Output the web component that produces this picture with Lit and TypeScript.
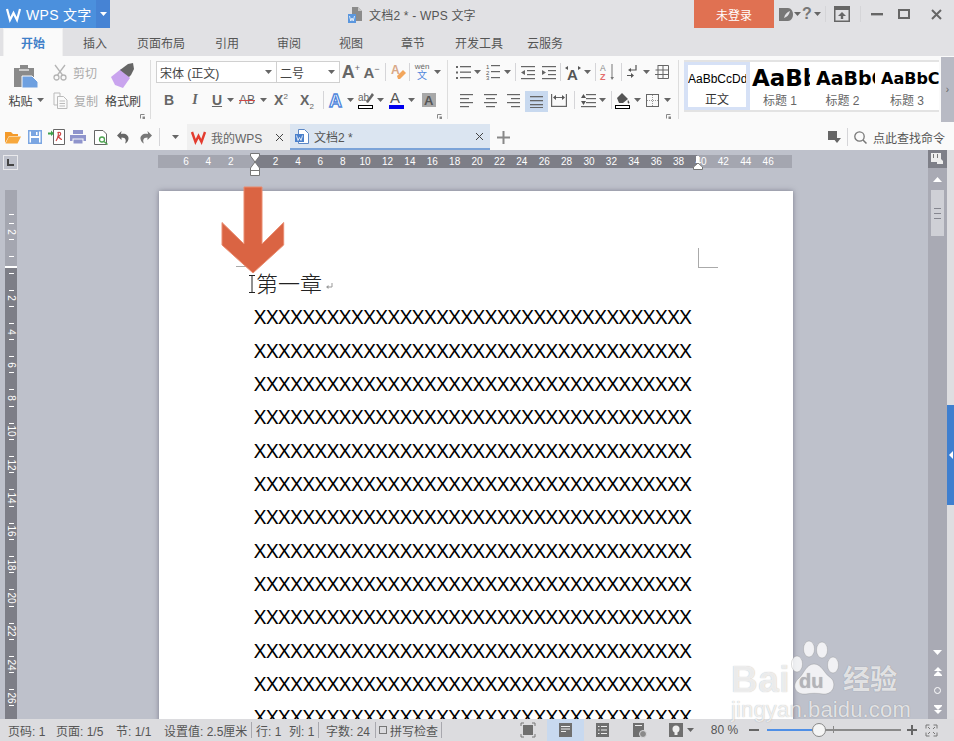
import { LitElement, html, css, svg, TemplateResult } from "lit";
import { customElement } from "lit/decorators.js";

type C = TemplateResult | string;
const S = (w: number, h: number, body: any) =>
  html`<svg width=${w} height=${h} viewBox=${`0 0 ${w} ${h}`}>${body}</svg>`;
const G = "#666";
const R = (x: number, y: number, w: number, h: number, f = G) => svg`<rect x=${x} y=${y} width=${w} height=${h} fill=${f}/>`;

const caret = (c = G) => S(7, 4, svg`<path d="M0 0H7L3.5 4Z" fill=${c}/>`);
const lines = (rows: [number, number][], w = 15) =>
  S(w, 15, rows.map(([x, l], i) => R(x, 1 + i * 4, l, 1.2)));

const IC = {
  wLogo: S(15, 13, svg`<path d="M1 1L4 12L7.5 5L11 12L14 1" fill="none" stroke="#fff" stroke-width="2.2"/>`),
  titleDoc: S(15, 17, svg`<path d="M4 1H10L14 5V15H4Z" fill="#8b8b8b"/><path d="M10 1L14 5H10Z" fill="#c8c8c8"/><rect x="0" y="8" width="8" height="9" fill="#5b97de"/><path d="M1.5 10L2.8 15L4 12L5.2 15L6.5 10" fill="none" stroke="#fff" stroke-width=".8"/>`),
  mLogo: S(16, 15, svg`<path d="M1 1H10C13 1 15 4 15 7.5C15 11 13 14 10 14H1Z" fill="#777"/><path d="M6 11C7 7 9 5 12 4C11 8 9 10 6 11Z" fill="#e1e1e4"/>`),
  upload: S(16, 16, svg`<rect x=".75" y=".75" width="14.5" height="14.5" fill="none" stroke="#666" stroke-width="1.5"/><rect x="1" y="1" width="14" height="3" fill="#666"/><path d="M8 6L12 10H9.2V13H6.8V10H4Z" fill="#666"/>`),
  min: S(12, 3, R(0, 0, 12, 2.4)),
  max: S(12, 10, svg`<rect x="1" y="1" width="10" height="8" fill="none" stroke="#666" stroke-width="2"/>`),
  close: S(11, 11, svg`<path d="M1 1L10 10M10 1L1 10" stroke="#666" stroke-width="2"/>`),
  paste: S(24, 24, svg`<path d="M0 4H6V1H14V4H20V23H0Z" fill="#8a8a8a"/><rect x="5" y="5" width="10" height="2" fill="#ccc"/><path d="M8 12H18L24 18V24H8Z" fill="#6ea0e0" stroke="#fafafa" stroke-width="1"/>`),
  scissors: S(14, 17, svg`<g fill="none" stroke="#b5b5b5" stroke-width="1.3"><path d="M2 1L9.5 11M12 1L4.500 11"/><circle cx="3.500" cy="13.500" r="2.500"/><circle cx="10.500" cy="13.500" r="2.500"/></g>`),
  copy: S(15, 17, svg`<g fill="#fafafa" stroke="#bbb" stroke-width="1"><path d="M1 1H7V13H1Z"/><path d="M4.500 4.500H10.500L14 8V16.500H4.500Z"/></g><path d="M6.500 9H12M6.500 11.500H12M6.500 14H12" stroke="#bbb"/>`),
  brush: S(24, 25, svg`<path d="M0 14L10 6L19 15L12 25L4 22Z" fill="#c9a4ee"/><path d="M9 7L17 1L22 0L23 6L20 12L18 14Z" fill="#666"/>`),
  launcher: S(5, 5, svg`<path d="M.5 4.500V.5H4.500" fill="none" stroke="#888"/><rect x="2.500" y="2.500" width="2.500" height="2.500" fill="#888"/>`),
  eraser: S(15, 17, svg`<text x="0" y="10" font-size="12" font-family="Liberation Sans" font-weight="700" fill="#d8a888">A</text><path d="M6 12L12 6L15 9L9 15H7Z" fill="#f2a65c"/>`),
  aOutline: S(16, 17, svg`<text x="1" y="15" font-size="18" font-family="Liberation Sans" font-weight="700" fill="#fff" stroke="#4f86dc" stroke-width="1.300">A</text>`),
  ab: S(16, 19, svg`<text x="0" y="10" font-size="10" font-family="Liberation Sans" fill="#666">ab</text><path d="M8 11L14 2L16 4L10 12Z" fill="#666"/><rect x=".5" y="14.500" width="14" height="3" fill="#fff" stroke="#000"/>`),
  aBlue: S(15, 19, svg`<text x="1" y="12" font-size="15" font-family="Liberation Sans" fill="#555">A</text><rect x="0" y="14" width="15" height="4" fill="#0000ee"/>`),
  aShade: S(14, 14, svg`<rect width="14" height="14" fill="#a8a8a8"/><text x="2" y="12" font-size="13" font-family="Liberation Sans" font-weight="700" fill="#555">A</text>`),
  bullets: S(15, 15, svg`${[1, 6.500, 12].map((y) => svg`${R(0, y, 2, 2)}${R(4, y, 11, 1.3)}`)}`),
  numbers: S(14, 16, svg`${[5, 10.500, 16].map((y, i) => svg`<text x="0" y=${y} font-size="6" font-family="Liberation Sans" fill="#555">${i + 1}</text>`)}${R(5, 1, 9, 1.2)}${R(5, 7, 9, 1.2)}${R(5, 13, 9, 1.2)}`),
  indL: S(14, 15, svg`${R(0, 1, 14, 1.2)}${R(6, 5, 8, 1.2)}${R(6, 9, 8, 1.2)}${R(0, 13, 14, 1.2)}<path d="M0 7.500L4 5V10Z" fill="#666"/>`),
  indR: S(14, 15, svg`${R(0, 1, 14, 1.2)}${R(6, 5, 8, 1.2)}${R(6, 9, 8, 1.2)}${R(0, 13, 14, 1.2)}<path d="M4 7.500L0 5V10Z" fill="#666"/>`),
  aSpace: S(16, 15, svg`<text x="2" y="15" font-size="15" font-family="Liberation Sans" font-weight="700" fill="#555">A</text><path d="M0 3L3 1V5ZM16 3L13 1V5Z" fill="#555"/>`),
  az: S(15, 18, svg`<text x="0" y="8" font-size="8.500" font-family="Liberation Sans" fill="#888">A</text><text x="0" y="17" font-size="9" font-family="Liberation Sans" font-weight="700" fill="#e46c6c">Z</text><path d="M12 1V15" stroke="#777"/><path d="M10.500 14H14L12 17Z" fill="#777"/>`),
  enter: S(10, 14, svg`<path d="M9 0V5H3" fill="none" stroke="#555" stroke-width="1.200"/><path d="M1 5L4 3V7ZM4 10H0V11H4V13L7 10.500L4 8Z" fill="#555"/>`),
  table: S(14, 14, svg`<path d="M3 .5H13.500V13.500H3M0 9.500H13.500M.5 5H13.500M3 0V14M8 0V14" fill="none" stroke="#666"/>`),
  aL: lines([[0, 13], [0, 9], [0, 13], [0, 9]], 13),
  aC: lines([[0, 13], [2, 9], [0, 13], [2, 9]], 13),
  aR: lines([[0, 13], [4, 9], [0, 13], [4, 9]], 13),
  aJ: S(13, 13, svg`${R(0, 1, 13, 1.3)}${R(0, 5, 13, 1.3)}${R(0, 9, 13, 1.3)}${R(0, 12, 13, 1)}`),
  dist: S(16, 13, svg`${R(0, 0, 1.2, 13)}${R(14.800, 0, 1.2, 13)}${R(0, 11.800, 16, 1.2)}${R(3, 3, 10, 1)}<path d="M2 3.500L5 1V6ZM14 3.500L11 1V6Z" fill="#555"/>`),
  lsp: S(15, 15, svg`${R(5, 1, 10, 1.2)}${R(5, 5, 10, 1.2)}${R(5, 9, 10, 1.2)}${R(0, 13, 15, 1.2)}<path d="M0 5L2.500 1L5 5ZM0 8H5L2.500 12Z" fill="#555"/>`),
  fill: S(15, 18, svg`<path d="M2 7L7 2L13 8L8 12H4Z" fill="#555"/><path d="M13 9C14 10.500 15 11.500 14 12.500C13 13 12 11 13 9Z" fill="#555"/><rect x=".5" y="14.500" width="14" height="3" fill="#fff" stroke="#000"/>`),
  border: S(13, 13, svg`<rect x=".5" y=".5" width="12" height="12" fill="none" stroke="#666"/><path d="M6.500 1V12M1 6.500H12" stroke="#999" stroke-dasharray="1 1"/>`),
  folder: S(16, 13, svg`<path d="M0 1H6L8 3H13V5H4L0 12Z" fill="#f49a2a"/><path d="M4 5.500H16L12.500 12.500H0.500Z" fill="#f7a83d"/>`),
  save: S(14, 14, svg`<rect x=".75" y=".75" width="12.500" height="12.500" fill="#fff" stroke="#7ba6e2" stroke-width="1.500"/><rect x="3" y="1" width="8" height="5" fill="#7ba6e2"/><rect x="3" y="8" width="8" height="5" fill="#7ba6e2"/><rect x="8" y="2" width="1.500" height="3" fill="#fff"/>`),
  pdf: S(17, 16, svg`<path d="M5.500 .5H16.500V15.500H5.500Z" fill="#fff" stroke="#666"/><path d="M0 3.500H3V1.500L6 4.500L3 7V5.500H0Z" fill="#3fa24b"/><path d="M8 12C10 9 11 5 10 3.500C13 2.500 14 6 10 7.500C11 8.500 13 10.500 14 10.500" fill="none" stroke="#d04848" stroke-width="1.200"/>`),
  print: S(16, 14, svg`<rect x="3" y="0" width="10" height="4" fill="#8f94cc"/><rect x="0" y="5" width="16" height="6" fill="#8f94cc"/><rect x="3" y="9" width="10" height="5" fill="#8f94cc" stroke="#fafafa"/>`),
  preview: S(14, 15, svg`<path d="M.5 .5H9L12.500 4V14.500H.5Z" fill="#fff" stroke="#666"/><circle cx="8" cy="9.500" r="2.500" fill="none" stroke="#4ca24f" stroke-width="1.300"/><path d="M10 11.500L13.500 14.500" stroke="#4ca24f" stroke-width="1.500"/>`),
  undo: S(13, 13, svg`<path d="M4 3C8 2 12 4 11.500 8C11 10.500 9.500 12 8 12.500C9.500 9.500 9 6.500 4.500 6.500V9L0 4.500L4.500 0Z" fill="#666"/>`),
  redo: S(13, 13, svg`<path d="M9 3C5 2 1 4 1.500 8C2 10.500 3.500 12 5 12.500C3.500 9.500 4 6.500 8.500 6.500V9L13 4.500L8.500 0Z" fill="#777"/>`),
  wps: S(15, 12, svg`<path d="M1 1L4.500 11L7.500 5L10.500 11L14 1" fill="none" stroke="#e33b2e" stroke-width="2.400"/>`),
  docTab: S(14, 15, svg`<path d="M3.500 .5H9.500L13.500 4.500V14.500H3.500Z" fill="#fff" stroke="#5d88c5"/><rect x="0" y="5" width="9" height="8" fill="#4a80cc"/><path d="M1.500 6.500L3 11.500L4.500 8.500L6 11.500L7.500 6.500" fill="none" stroke="#fff" stroke-width=".8"/>`),
  x: S(9, 9, svg`<path d="M1 1L8 8M8 1L1 8" stroke="#444" stroke-width="1"/>`),
  plus: S(13, 13, svg`${R(5.500, 0, 2, 13, "#888")}${R(0, 5.500, 13, 2, "#888")}`),
  cmd: S(13, 12, svg`${R(0, 0, 9, 9)}<path d="M5 7H13L9 12Z" fill="#666"/>`),
  search: S(13, 13, svg`<circle cx="5.500" cy="5.500" r="4.700" fill="none" stroke="#777" stroke-width="1.300"/><path d="M9 9L12.500 12.500" stroke="#777" stroke-width="1.500"/>`),
  sToggle: S(13, 12, svg`<rect width="10" height="9" fill="#eee"/>${R(2, 1, 1, 4, "#777")}${R(6, 1, 1, 4, "#777")}<path d="M6 11V8L9 5L12 8V11Z" fill="#eee"/>`),
  tri: (up: boolean) => S(9, 5, svg`<path d=${up ? "M0 5H9L4.500 0Z" : "M0 0H9L4.500 5Z"} fill="#fff"/>`),
  dblU: S(8, 9, svg`<path d="M0 4H8L4 0ZM0 8H8V9H0ZM0 8L4 4L8 8Z" fill="#fff"/>`),
  dblD: S(8, 9, svg`<path d="M0 0H8V1H0ZM0 1H8L4 5ZM0 5H8L4 9Z" fill="#fff"/>`),
  circ: S(7, 7, svg`<circle cx="3.500" cy="3.500" r="3" fill="none" stroke="#fff"/>`),
  fit: S(14, 14, svg`<rect x="2" y="2" width="10" height="10" fill="#6f6f6f"/><path d="M0 3V0H3M11 0H14V3M14 11V14H11M3 14H0V11" fill="none" stroke="#777"/>`),
  pageV: S(13, 14, svg`<rect width="13" height="14" fill="#6f6f6f"/>${R(2, 3, 9, 1, "#eee")}${R(2, 5.500, 9, 1, "#eee")}${R(2, 8, 5, 1, "#eee")}`),
  outline: S(13, 14, svg`<rect width="13" height="14" fill="#6f6f6f"/>${[3, 6.500, 10].map((y) => svg`${R(2, y, 1.500, 1, "#eee")}${R(5, y, 6, 1, "#eee")}`)}`),
  web: S(14, 15, svg`<rect width="11" height="14" fill="#6f6f6f"/>${R(2, 2, 7, 1, "#eee")}<circle cx="10" cy="11" r="3.500" fill="#8a8a8a" stroke="#dcdcdf"/>`),
  bulb: S(14, 14, svg`<rect width="14" height="14" fill="#6f6f6f"/><circle cx="7" cy="6" r="3.500" fill="#eee"/><rect x="5.500" y="9" width="3" height="3" fill="#eee"/>`),
  minus: S(10, 2, R(0, 0, 10, 2)),
  plusS: S(10, 10, svg`${R(4, 0, 2, 10)}${R(0, 4, 10, 2)}`),
  full: S(11, 11, svg`<path d="M0 3.500V0H3.500M7.500 0H11V3.500M11 7.500V11H7.500M3.500 11H0V7.500" fill="none" stroke="#777"/><path d="M2 2L4 4M9 2L7 4M2 9L4 7M9 9L7 7" stroke="#777"/>`),
  ret: S(7, 7, svg`<path d="M6 0V4H1" fill="none" stroke="#999"/><path d="M0 4L2.500 2V6Z" fill="#999"/>`),
  ibeam: S(6, 18, svg`<path d="M0 .5H6M0 17.500H6M3 0V18" stroke="#222" fill="none"/>`),
  corner: S(7, 7, svg`<path d="M1 0V6H7" fill="none" stroke="#444" stroke-width="2"/>`),
  arrow: S(64, 88, svg`<path d="M23 1H41V58L62.700 36.500V59L32 87L1 59V36.500L23 58Z" fill="#da6443" stroke="#ea8c70" stroke-width="1"/>`),
};

const sep = (h = 18) => html`<i class="vsep" style=${`height:${h}px`}></i>`;
const cell = (w: number, c: C = "", cls = "") =>
  html`<span class="cell ${cls}" style=${`width:${w}px`}>${c}</span>`;

const hNums = ["6", "4", "2", "", ...Array.from({ length: 23 }, (_, i) => String((i + 1) * 2))];
const vNums = ["", "2", "", ...Array.from({ length: 14 }, (_, i) => String((i + 1) * 2))];

@customElement("app-root")
export class AppRoot extends LitElement {
  static styles = css`
    :host { display: block; width: 954px; height: 741px; overflow: hidden; position: relative;
      font: 12px "Liberation Sans", "Noto Sans CJK SC", sans-serif; color: #444; }
    * { box-sizing: border-box; }
    svg { display: block; flex: none; overflow: visible; }
    .root { display: flex; flex-direction: column; height: 741px; background: #e1e1e4; }
    .cell { display: flex; align-items: center; justify-content: center; flex: none; height: 100%; white-space: nowrap; }
    .left { justify-content: flex-start; }
    .vsep { display: block; width: 1px; background: #d5d5d8; flex: none; }

    .title { display: flex; height: 28px; flex: none; align-items: stretch; }
    .logo { width: 96px; background: #4b90dd; color: #fff; display: flex; align-items: center; gap: 5px; padding-left: 6px; font-size: 14px; letter-spacing: .3px; }
    .logo-drop { width: 14px; background: #4683d4; display: flex; align-items: center; justify-content: center; }
    .doc-title { flex: 1; display: flex; align-items: center; gap: 6px; padding-left: 238px; color: #555; font-size: 12px; letter-spacing: .2px; }
    .login { width: 80px; background: #e07152; color: #fff; display: flex; align-items: center; justify-content: center; font-size: 12px; flex: none; }
    .q { font-size: 16px; font-weight: 700; color: #777; }

    .tabs { display: flex; height: 28px; flex: none; padding-left: 3px; }
    .tab { display: flex; align-items: center; justify-content: center; flex: none; color: #555; }
    .tab.on { background: #fafafa; color: #3f80c8; font-weight: 700; border: 1px solid #f0f0f0; border-bottom: 0; }

    .ribbon { display: flex; height: 68px; flex: none; background: #fafafa; }
    .rsep { width: 1px; height: 59px; margin-top: 4px; background: #ddd; flex: none; }
    .grp { position: relative; flex: none; }
    .lnch { position: absolute; right: 5px; bottom: 5px; }
    .g1 { width: 150px; display: flex; }
    .bigcol { display: flex; flex-direction: column; align-items: center; padding-top: 7px; }
    .bigicon { height: 25px; display: flex; align-items: center; justify-content: center; }
    .biglabel { margin-top: 4px; height: 16px; display: flex; align-items: center; gap: 4px; color: #444; }
    .c1 { width: 52px; } .c3 { width: 38px; margin-left: 2px; }
    .c2 { width: 50px; display: flex; flex-direction: column; padding-top: 7px; gap: 10px; }
    .smrow { height: 18px; display: flex; align-items: center; gap: 6px; color: #aaa; padding-left: 1px; }
    .g2 { width: 296px; padding: 5px 0 0 5px; display: flex; flex-direction: column; }
    .g3 { width: 230px; padding-top: 5px; display: flex; flex-direction: column; }
    .r1 { display: flex; height: 22px; }
    .r2 { display: flex; height: 24px; margin-top: 5px; }
    .combo { border: 1px solid #d0d0d0; display: flex; align-items: center; justify-content: space-between; padding: 0 4px 0 3px; height: 22px; font-size: 12px; color: #444; background: #fff; }
    .combo + .combo { border-left: 0; }
    .fmt { font-size: 14px; font-weight: 700; color: #666; }
    .ital { font: italic 14px "Liberation Serif", serif; font-weight: 700; }
    .ul { text-decoration: underline; }
    .strike { text-decoration: line-through; text-decoration-color: #d04848; font-weight: 400; font-size: 12px; }
    .fmt sup, .fmt sub { font-size: 8px; line-height: 0; font-weight: 400; }
    .bigA { font-size: 18px; font-weight: 700; color: #666; }
    .bigA.s { font-size: 15px; }
    .bigA sup { font-size: 9px; line-height: 0; font-weight: 400; }
    .wen { display: flex; flex-direction: column; align-items: center; line-height: 8px; font-size: 8px; color: #666; }
    .wen b { color: #4f86dc; font-weight: 400; font-size: 10px; line-height: 10px; }
    .act { background: #c8d9ef; height: 21px; margin-top: 3px; }

    .g4 { display: flex; flex: none; }
    .gallery { width: 255px; height: 52px; margin: 4px 0 0 5px; display: flex; background: #fff; border: solid #e3e3e3; border-width: 2px 0 2px 0; }
    .sty { flex: none; display: flex; flex-direction: column; align-items: center; overflow: hidden; color: #666; }
    .sty.on { border: 4px solid #d6e1f6; border-top-width: 3px; border-bottom-width: 3px; color: #333; }
    .pv { height: 32px; display: flex; align-items: center; color: #000; white-space: nowrap; width: 100%; overflow: hidden; font-family: "DejaVu Sans", sans-serif; }
    .pv.plain { font-family: "Liberation Sans", sans-serif; }
    .sty .lb { font-size: 12px; line-height: 14px; }
    .more { width: 13px; height: 65px; margin: 1px 0 0 2px; background: #b8bac4; display: flex; align-items: center; justify-content: center; color: #666; font-size: 10px; }

    .quick { display: flex; height: 26px; flex: none; background: #fafafa; align-items: stretch; }
    .dtab { flex: none; display: flex; align-items: center; background: #f0f0f0; padding: 0 6px 0 4px; gap: 5px; color: #666; }
    .dtab.cur { background: #dbe5f1; border-bottom: 2px solid #7ba3d8; padding-left: 5px; color: #555; }
    .dtab .sp { flex: 1; }
    .qright { margin-left: auto; padding-right: 9px; display: flex; align-items: center; gap: 6px; color: #555; }

    .work { flex: 1; min-height: 0; display: flex; background: #bec1cb; overflow: hidden; }
    .center { width: 928px; flex: none; display: flex; flex-direction: column; overflow: hidden; }
    .rtop { height: 40px; flex: none; padding-top: 5px; display: flex; align-items: flex-start; }
    .cbtn { width: 15px; height: 15px; margin-left: 3px; border: 1px solid #e9e9ec; display: flex; align-items: center; justify-content: center; }
    .hr { position: relative; width: 634px; height: 13px; margin-left: 140px; padding-left: 16.800px; display: flex; color: #fff; font-size: 10px;
      background: linear-gradient(90deg, #a4a6b0 96px, #7d7e87 96px, #7d7e87 539px, #a4a6b0 539px); }
    .hn { width: 22.400px; flex: none; text-align: center; line-height: 13px; }
    .marker { position: absolute; top: -2px; left: 92px; width: 10px; }
    .marker2 { position: absolute; top: 1px; left: 535px; width: 10px; }
    .body { flex: 1; min-height: 0; display: flex; align-items: flex-start; }
    .vr { width: 12px; height: 529px; margin-left: 5px; flex: none; overflow: hidden; color: #fff; font-size: 10px;
      background: linear-gradient(180deg, #a4a6b0 76px, #fff 76px, #fff 78px, #7d7e87 78px); }
    .vc { height: 33.300px; display: flex; flex-direction: column; align-items: center; justify-content: space-between; padding: 8px 0; }
    .vc.first { height: 25px; padding: 0 0 0; justify-content: flex-end; }
    .vc i { display: block; width: 5px; height: 1px; background: #fff; flex: none; }
    .vc span { transform: rotate(90deg); line-height: 10px; height: 10px; white-space: nowrap; }
    .page { position: relative; width: 634px; height: 600px; margin: 1px 0 0 142px; flex: none; background: #fff; box-shadow: 0 0 5px rgba(70,70,90,.55); padding: 76px 100px 0 95px; color: #000; }
    .mark-l { position: absolute; left: 77px; top: 56px; width: 18px; height: 20px; border-bottom: 1px solid #aaa; }
    .mark-r { position: absolute; left: 539px; top: 57px; width: 20px; height: 20px; border: solid #aaa; border-width: 0 0 1px 1px; }
    .h { height: 33.350px; display: flex; align-items: center; font-size: 22px; font-weight: 300; margin-left: -5px; gap: 1px; color: #222; white-space: nowrap; }
    .h span { margin-top: -4px; }
    .h svg:last-child { margin: 6px 0 0 3px; }
    .xl { height: 33.350px; font: 20.750px/33.350px "Noto Sans", sans-serif; white-space: nowrap; }

    .scroll { width: 19px; flex: none; background: #a9aab4; display: flex; flex-direction: column; align-items: center; }
    .stop { width: 100%; height: 18px; background: #7e7f88; display: flex; align-items: center; justify-content: center; flex: none; }
    .sbtn { width: 100%; height: 22px; display: flex; align-items: center; justify-content: center; flex: none; }
    .thumb { width: 13px; height: 46px; background: #cfd0d6; flex: none; display: flex; flex-direction: column; gap: 4px; align-items: center; justify-content: center; }
    .thumb i { display: block; width: 7px; height: 1px; background: #85868f; }
    .sgrow { flex: 1; }
    .s19 { height: 19px; }
    .strip { width: 7px; flex: none; background: #dedee1; padding-top: 255px; }
    .blue { height: 100px; background: #3f7fcf; display: flex; align-items: center; justify-content: center; }
    .blue s { display: block; width: 0; height: 0; border: 4px solid transparent; border-left: 0; border-right: 4px solid #fff; }

    .status { height: 22px; flex: none; background: #dcdcdf; display: flex; color: #555; position: relative; }
    .status .vsep { background: #a8a8ae; height: 16px; }
    .pv-on { background: #c8d9ef; }
    .chk { width: 8px; height: 8px; border: 1px solid #777; margin-right: 3px; flex: none; }
    .zoom { font-size: 12px; }
    .slider { position: relative; height: 2px; width: 134px; background: linear-gradient(90deg, #4f8fe6 45px, #8a8a8a 45px); }
    .knob { position: absolute; left: 45px; top: -6px; width: 14px; height: 14px; border-radius: 50%; background: #f5f5f5; border: 1px solid #888; }
    .tick { position: absolute; left: 66px; top: -3px; width: 1px; height: 7px; background: #888; }

    .arrow { position: absolute; left: 221px; top: 186px; }
    .wm { position: absolute; left: 731px; top: 639px; width: 175px; height: 82px; color: rgba(255,255,255,.75); text-shadow: 0 0 1px rgba(0,0,0,.3); pointer-events: none; }
    .wm-top { display: flex; align-items: flex-end; height: 60px; }
    .bai { font: 700 37px "Liberation Sans", sans-serif; line-height: 38px; width: 60px; letter-spacing: .5px; }
    .jy { font: 700 27px "Noto Sans CJK SC", sans-serif; line-height: 38px; margin-left: 2px; margin-bottom: 2px; white-space: nowrap; }
    .wm-url { font: 400 22px "Liberation Sans", sans-serif; line-height: 22px; white-space: nowrap; letter-spacing: .15px; }
  `;

  private renderTitle() {
    return html`<div class="title">
      <div class="logo">${IC.wLogo}<span>WPS 文字</span></div>
      <div class="logo-drop">${caret("#fff")}</div>
      <div class="doc-title">${IC.titleDoc}<span>文档2 * - WPS 文字</span></div>
      <div class="login">未登录</div>
      ${cell(4)}${cell(15, IC.mLogo)}${cell(9, caret())}
      ${cell(10, html`<span class="q">?</span>`)}${cell(10, caret())}${cell(3)}
      ${cell(1, sep(16))}${cell(8)}${cell(16, IC.upload)}${cell(10)}${cell(1, sep(16))}${cell(10)}
      ${cell(12, IC.min)}${cell(15)}${cell(12, IC.max)}${cell(21)}${cell(11, IC.close)}${cell(12)}
    </div>`;
  }

  private renderTabs() {
    const t: [string, number][] = [["开始", 60], ["插入", 64], ["页面布局", 68], ["引用", 64], ["审阅", 60], ["视图", 64], ["章节", 60], ["开发工具", 72], ["云服务", 60]];
    return html`<div class="tabs">${t.map(([n, w], i) => html`<div class="tab ${i === 0 ? "on" : ""}" style=${`width:${w}px`}>${n}</div>`)}</div>`;
  }

  private renderRibbon() {
    const g2r1: [number, C, string?][] = [
      [22, html`<span class="bigA">A<sup>+</sup></span>`], [19, html`<span class="bigA s">A<sup>−</sup></span>`],
      [8, sep()], [18, IC.eraser], [4, sep()],
      [22, html`<span class="wen">wén<b>文</b></span>`], [8, caret()],
    ];
    const g2r2: [number, C][] = [
      [26, html`<span class="fmt">B</span>`], [26, html`<span class="fmt ital">I</span>`], [18, html`<span class="fmt ul">U</span>`], [8, caret()],
      [26, html`<span class="fmt strike">AB</span>`], [6, caret()], [30, html`<span class="fmt">X<sup>2</sup></span>`], [22, html`<span class="fmt">X<sub>2</sub></span>`],
      [10, sep()], [16, IC.aOutline], [12, caret()], [20, IC.ab], [8, caret()], [24, IC.aBlue], [6, caret()], [30, IC.aShade],
    ];
    const g3r1: [number, C][] = [
      [8, ""], [15, IC.bullets], [12, caret()], [3, ""], [14, IC.numbers], [14, caret()], [2, sep()], [5, ""], [14, IC.indL], [7, ""], [14, IC.indR],
      [9, sep()], [16, IC.aSpace], [12, caret()], [4, sep()], [3, ""], [15, IC.az], [12, sep()], [10, IC.enter], [18, caret()], [14, IC.table],
    ];
    const g3r2: [number, C, string?][] = [
      [12, ""], [13, IC.aL], [11, ""], [13, IC.aC], [10, ""], [13, IC.aR], [5, ""], [23, IC.aJ, "act"], [3, ""], [16, IC.dist],
      [14, sep()], [15, IC.lsp], [12, caret()], [6, sep()], [1, ""], [15, IC.fill], [14, caret()], [2, ""], [13, IC.border], [16, caret()],
    ];
    const styles = [
      { w: 66, lb: "正文", t: "AaBbCcDd", fs: 12, fw: 400, pad: 0, on: true },
      { w: 60, lb: "标题 1", t: "AaBbCc", fs: 23, fw: 700, pad: 2 },
      { w: 65, lb: "标题 2", t: "AaBbCc", fs: 19, fw: 700, pad: 6 },
      { w: 64, lb: "标题 3", t: "AaBbCc", fs: 16, fw: 700, pad: 6 },
    ];
    return html`<div class="ribbon">
      <div class="grp g1">
        <div class="bigcol c1"><div class="bigicon">${IC.paste}</div><div class="biglabel">粘贴 ${caret()}</div></div>
        <div class="c2">
          <div class="smrow">${IC.scissors}<span>剪切</span></div>
          <div class="smrow">${IC.copy}<span>复制</span></div>
        </div>
        <div class="bigcol c3"><div class="bigicon">${IC.brush}</div><div class="biglabel">格式刷</div></div>
        <span class="lnch">${IC.launcher}</span>
      </div>
      <div class="rsep"></div>
      <div class="grp g2">
        <div class="r1">
          <div class="combo" style="width:121px"><span>宋体 (正文)</span>${caret()}</div>
          <div class="combo" style="width:63px"><span>二号</span>${caret()}</div>
          ${g2r1.map(([w, c]) => cell(w, c))}
        </div>
        <div class="r2">${g2r2.map(([w, c]) => cell(w, c))}</div>
        <span class="lnch">${IC.launcher}</span>
      </div>
      <div class="rsep"></div>
      <div class="grp g3">
        <div class="r1">${g3r1.map(([w, c]) => cell(w, c))}</div>
        <div class="r2">${g3r2.map(([w, c, k]) => cell(w, c, k ?? ""))}</div>
        <span class="lnch" style="right:7px">${IC.launcher}</span>
      </div>
      <div class="rsep"></div>
      <div class="g4">
        <div class="gallery">
          ${styles.map((s) => html`<div class="sty ${s.on ? "on" : ""}" style=${`width:${s.w}px`}>
            <div class="pv ${s.on ? "plain" : ""}" style=${`font-size:${s.fs}px;font-weight:${s.fw};padding-left:${s.pad}px`}>${s.t}</div>
            <div class="lb">${s.lb}</div>
          </div>`)}
        </div>
        <div class="more">›</div>
      </div>
    </div>`;
  }

  private renderQuick() {
    const q: [number, C][] = [
      [4, ""], [17, IC.folder], [6, ""], [15, IC.save], [6, ""], [17, IC.pdf], [5, ""], [16, IC.print], [8, ""], [14, IC.preview],
      [8, ""], [15, IC.undo], [7, ""], [14, IC.redo], [14, sep(18)], [18, caret()], [3, ""],
    ];
    return html`<div class="quick">
      ${q.map(([w, c]) => cell(w, c))}
      <div class="dtab" style="width:103px">${IC.wps}<span>我的WPS</span><span class="sp"></span>${IC.x}</div>
      <div class="dtab cur" style="width:200px">${IC.docTab}<span>文档2 *</span><span class="sp"></span>${IC.x}</div>
      ${cell(26, IC.plus)}
      <div class="qright">${IC.cmd}${sep(18)}${IC.search}<span>点此查找命令</span></div>
    </div>`;
  }

  private renderWork() {
    const rows = Array.from({ length: 13 }, () => "X".repeat(36));
    return html`<div class="work">
      <div class="center">
        <div class="rtop">
          <div class="cbtn">${IC.corner}</div>
          <div class="hr">
            ${hNums.map((n) => html`<span class="hn">${n}</span>`)}
            <span class="marker">${S(10, 23, svg`<path d="M.5 .5H9.500V3L5 9L9.500 15V22.500H.5V15L5 9L.5 3Z" fill="#fff" stroke="#777"/><path d="M1 17.500H9" stroke="#777"/>`)}</span>
            <span class="marker2">${S(10, 14, svg`<path d="M5 7L9.500 11V13.500H.5V11Z" fill="#fff" stroke="#777"/><rect x="3" y="0" width="3" height="7" fill="#fff"/>`)}</span>
          </div>
        </div>
        <div class="body">
          <div class="vr">
            ${vNums.map((n, i) => i === 0
              ? html`<div class="vc first"><i></i></div>`
              : html`<div class="vc"><i></i><span>${n}</span><i></i></div>`)}
          </div>
          <div class="page">
            <div class="mark-l"></div><div class="mark-r"></div>
            <div class="h">${IC.ibeam}<span>第一章</span>${IC.ret}</div>
            ${rows.map((r) => html`<div class="xl">${r}</div>`)}
          </div>
        </div>
      </div>
      <div class="scroll">
        <div class="stop">${IC.sToggle}</div>
        <div class="sbtn">${IC.tri(true)}</div>
        <div class="thumb"><i></i><i></i><i></i></div>
        <div class="sgrow"></div>
        <div class="sbtn s19">${IC.tri(false)}</div>
        <div class="sbtn s19">${IC.dblU}</div>
        <div class="sbtn s19">${IC.circ}</div>
        <div class="sbtn s19">${IC.dblD}</div>
      </div>
      <div class="strip"><div class="blue"><s></s></div></div>
    </div>`;
  }

  private renderStatus() {
    const lt = (w: number, t: C) => cell(w, t, "left");
    return html`<div class="status">
      ${cell(8)}${lt(48, "页码: 1")}${lt(60, "页面: 1/5")}${lt(48, "节: 1/1")}${lt(87, "设置值: 2.5厘米")}
      ${lt(5, sep(16))}${lt(33, "行: 1")}${lt(29, "列: 1")}${lt(8, sep(16))}${lt(49, "字数: 24")}${lt(4, sep(16))}
      ${lt(62, html`<i class="chk"></i>拼写检查`)}${lt(1, sep(16))}
      ${cell(79)}${cell(14, IC.fit)}${cell(12)}${cell(37, IC.pageV, "pv-on")}${cell(12)}${cell(13, IC.outline)}${cell(24)}${cell(14, IC.web)}${cell(22)}
      ${cell(14, IC.bulb)}${cell(14, caret())}${cell(13)}${cell(29, html`<span class="zoom">80 %</span>`)}${cell(10)}${cell(10, IC.minus)}${cell(8)}
      ${cell(134, html`<div class="slider"><i class="tick"></i><i class="knob"></i></div>`)}
      ${cell(6)}${cell(10, IC.plusS)}${cell(9)}${cell(11, IC.full)}
    </div>`;
  }

  render() {
    return html`<div class="root">
      ${this.renderTitle()}${this.renderTabs()}${this.renderRibbon()}${this.renderQuick()}${this.renderWork()}${this.renderStatus()}
    </div>
    <div class="arrow">${IC.arrow}</div>
    <div class="wm">
      <div class="wm-top">
        <span class="bai">Bai</span>
        ${S(50, 60, svg`<g transform="translate(-2 1)"><g fill="rgba(255,255,255,.78)" stroke="rgba(120,120,120,.4)" stroke-width=".7"><ellipse cx="8" cy="24" rx="5.500" ry="8"/><ellipse cx="20" cy="9" rx="5.500" ry="8"/><ellipse cx="33" cy="10" rx="5.500" ry="8"/><ellipse cx="44" cy="25" rx="5.500" ry="8"/><path d="M25 24C33 24 35 34 42 38C48 44 44 55 34 54C28 53 22 53 17 54C6 55 2 45 10 38C15 34 17 24 25 24Z"/></g><text x="10" y="48" font-size="20" font-weight="700" font-family="Liberation Sans" fill="rgba(180,180,185,.9)" stroke="none">du</text></g>`)}
        <span class="jy">经验</span>
      </div>
      <div class="wm-url">jingyan.baidu.com</div>
    </div>`;
  }
}
